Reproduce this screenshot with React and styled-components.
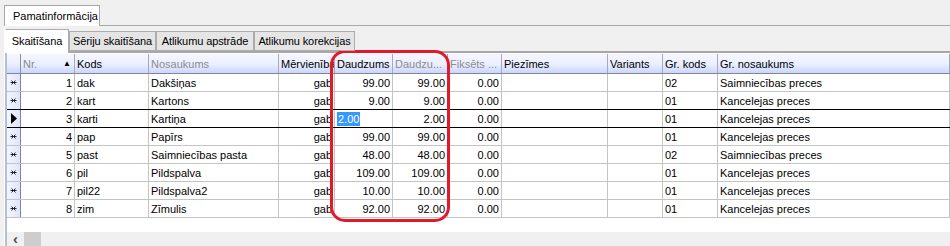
import React from 'react'
import styled, { createGlobalStyle } from 'styled-components'

const GlobalStyle = createGlobalStyle`
  html, body {
    margin: 0;
    padding: 0;
    background: #f0f0f0;
  }
  body {
    font-family: Tahoma, "Liberation Sans", "DejaVu Sans", sans-serif;
    font-size: 11px;
    color: #000;
  }
`

const COLS = '14px 54px 74px 130px 56px 58px 55px 54px 106px 55px 55px 1fr'

const tabs = [
  { title: 'Skaitīšana', w: 64, active: true },
  { title: 'Sēriju skaitīšana', w: 87 },
  { title: 'Atlikumu apstrāde', w: 98 },
  { title: 'Atlikumu korekcijas', w: 101 },
]

const columns = [
  { title: 'Nr.', dim: true, sort: true },
  { title: 'Kods' },
  { title: 'Nosaukums', dim: true },
  { title: 'Mērvienība' },
  { title: 'Daudzums' },
  { title: 'Daudzu...', dim: true },
  { title: 'Fiksēts ...', dim: true },
  { title: 'Piezīmes' },
  { title: 'Variants' },
  { title: 'Gr. kods' },
  { title: 'Gr. nosaukums' },
]

const rows = [
  { nr: 1, kods: 'dak', nos: 'Dakšiņas', d1: '99.00', d2: '99.00', gk: '02', gn: 'Saimniecības preces' },
  { nr: 2, kods: 'kart', nos: 'Kartons', d1: '9.00', d2: '9.00', gk: '01', gn: 'Kancelejas preces' },
  { nr: 3, kods: 'karti', nos: 'Kartiņa', d1: '2.00', d2: '2.00', gk: '01', gn: 'Kancelejas preces', current: true },
  { nr: 4, kods: 'pap', nos: 'Papīrs', d1: '99.00', d2: '99.00', gk: '01', gn: 'Kancelejas preces' },
  { nr: 5, kods: 'past', nos: 'Saimniecības pasta', d1: '48.00', d2: '48.00', gk: '02', gn: 'Saimniecības preces' },
  { nr: 6, kods: 'pil', nos: 'Pildspalva', d1: '109.00', d2: '109.00', gk: '01', gn: 'Kancelejas preces' },
  { nr: 7, kods: 'pil22', nos: 'Pildspalva2', d1: '10.00', d2: '10.00', gk: '01', gn: 'Kancelejas preces' },
  { nr: 8, kods: 'zim', nos: 'Zīmulis', d1: '92.00', d2: '92.00', gk: '01', gn: 'Kancelejas preces' },
]

function NewRowMark() {
  return (
    <svg width="7" height="7" viewBox="0 0 7 7">
      <path d="M0.5 3.5h6M1.5 1.5l4 4M5.5 1.5l-4 4" stroke="#222" strokeWidth="1" fill="none" />
    </svg>
  )
}

function CurrentMark() {
  return (
    <svg width="6" height="11" viewBox="0 0 6 11">
      <polygon points="0,0 6,5.5 0,11" fill="#000" />
    </svg>
  )
}

function App() {
  return (
    <Screen>
      <GlobalStyle />
      <TopTabs>
        <TopTab>Pamatinformācija</TopTab>
      </TopTabs>
      <Panel>
        <InnerTabs>
          {tabs.map((t) => (
            <InnerTab key={t.title} $active={t.active} $w={t.w}>{t.title}</InnerTab>
          ))}
        </InnerTabs>
        <GridBox>
          <HeaderRow>
            <HeadIndicator />
            {columns.map((c) => (
              <HeadCell key={c.title} $dim={c.dim}>
                <span>{c.title}</span>
                {c.sort && <SortArrow>▲</SortArrow>}
              </HeadCell>
            ))}
          </HeaderRow>
          {rows.map((r, i) => (
            <Row key={r.nr} $current={r.current} $beforeCurrent={rows[i + 1] && rows[i + 1].current}>
              <Indicator>{r.current ? <CurrentMark /> : <NewRowMark />}</Indicator>
              <Cell $right>{r.nr}</Cell>
              <Cell>{r.kods}</Cell>
              <Cell>{r.nos}</Cell>
              <Cell $right>gab</Cell>
              {r.current ? (
                <Cell><Selected>{r.d1}</Selected></Cell>
              ) : (
                <Cell $right>{r.d1}</Cell>
              )}
              <Cell $right>{r.d2}</Cell>
              <Cell $right>0.00</Cell>
              <Cell />
              <Cell />
              <Cell>{r.gk}</Cell>
              <Cell>{r.gn}</Cell>
            </Row>
          ))}
          <Spacer />
          <HScroll>
            <ScrollArrow>‹</ScrollArrow>
            <ScrollThumb />
          </HScroll>
        </GridBox>
      </Panel>
      <Highlight />
    </Screen>
  )
}

export default App

const Screen = styled.div`
  position: relative;
  width: 950px;
  height: 246px;
  overflow: hidden;
  background: #f0f0f0;
`

const TopTabs = styled.div`
  display: flex;
  align-items: flex-end;
  height: 25px;
  padding-left: 4px;
`

const TopTab = styled.div`
  box-sizing: border-box;
  height: 21px;
  width: 96px;
  margin-bottom: -1px;
  padding: 4px 0 0 8px;
  background: #fff;
  border: 1px solid #a6a6a6;
  border-bottom: none;
  position: relative;
  z-index: 1;
`

const Panel = styled.div`
  margin-left: 4px;
  border-top: 1px solid #a8a8a8;
  border-left: 1px solid #fff;
  height: 220px;
  display: flex;
  flex-direction: column;
`

const InnerTabs = styled.div`
  display: flex;
  align-items: flex-end;
  height: 25px;
`

const InnerTab = styled.div`
  box-sizing: border-box;
  width: ${(p) => p.$w}px;
  height: ${(p) => (p.$active ? '24px' : '20px')};
  margin-bottom: ${(p) => (p.$active ? '-2px' : '0')};
  padding-top: ${(p) => (p.$active ? '5px' : '3px')};
  text-align: center;
  letter-spacing: -0.1px;
  background: ${(p) => (p.$active ? '#fff' : '#e5e5e5')};
  border: 1px solid #acacac;
  border-bottom: ${(p) => (p.$active ? 'none' : '1px solid #acacac')};
  border-left: ${(p) => (p.$active ? '1px solid #fff' : '1px solid #acacac')};
  white-space: nowrap;
  position: relative;
  z-index: 1;
`

const GridBox = styled.div`
  flex: 1;
  display: flex;
  flex-direction: column;
  border-top: 2px solid #a8a8a8;
  border-left: 2px solid #b4c0d4;
  background: #fff;
`

const HeaderRow = styled.div`
  display: grid;
  grid-template-columns: ${COLS};
  height: 21px;
  box-sizing: border-box;
  border-top: 1px solid #fff;
  border-bottom: 1px solid #7f8696;
  background: linear-gradient(#f6f6ff, #eaeeff 55%, #cad6ff);
`

const HeadIndicator = styled.div`
  border-right: 1px solid #8a90a0;
`

const HeadCell = styled.div`
  display: flex;
  align-items: center;
  justify-content: space-between;
  padding: 0 3px 0 2px;
  border-right: 1px solid #a4aab8;
  color: ${(p) => (p.$dim ? '#8c8c8c' : '#000')};
  white-space: nowrap;
  overflow: hidden;
`

const SortArrow = styled.span`
  font-size: 8px;
  color: #000;
`

const Row = styled.div`
  display: grid;
  grid-template-columns: ${COLS};
  height: 18px;
  box-sizing: border-box;
  border-bottom: 1px solid ${(p) => (p.$current || p.$beforeCurrent ? '#000' : '#c4c4c4')};
`

const Indicator = styled.div`
  display: flex;
  align-items: center;
  justify-content: center;
  background: linear-gradient(90deg, #f4f4ff, #dfe5ff);
  border-right: 1px solid #7f8696;
`

const Cell = styled.div`
  display: flex;
  align-items: center;
  justify-content: ${(p) => (p.$right ? 'flex-end' : 'flex-start')};
  padding: 0 2px;
  border-right: 1px solid #c4c4c4;
  white-space: nowrap;
  overflow: hidden;
`

const Selected = styled.span`
  background: #3399ff;
  color: #fff;
  padding: 0 1px;
  line-height: 14px;
`

const Spacer = styled.div`
  flex: 1;
`

const HScroll = styled.div`
  height: 14px;
  display: flex;
  align-items: center;
  background: #f0f0f0;
`

const ScrollArrow = styled.div`
  width: 17px;
  text-align: center;
  font-size: 15px;
  line-height: 14px;
  color: #505050;
  font-weight: bold;
`

const ScrollThumb = styled.div`
  width: 17px;
  height: 14px;
  background: #cdcdcd;
`

const Highlight = styled.div`
  position: absolute;
  left: 330px;
  top: 50px;
  width: 120px;
  height: 172px;
  box-sizing: border-box;
  border: 3px solid #e3182b;
  border-radius: 15px;
  pointer-events: none;
`
